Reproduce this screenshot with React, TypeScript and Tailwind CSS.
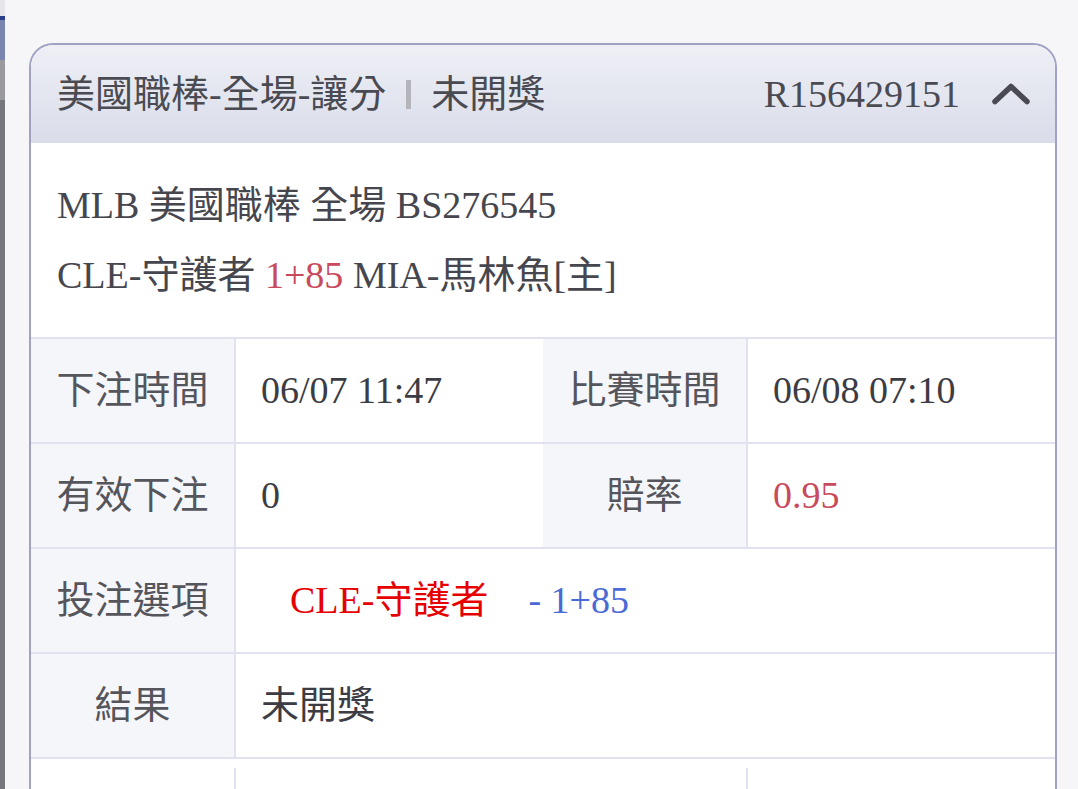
import React from "react";

const LINE = "border-[#e1e2ef]";

function Row({ children }: { children: React.ReactNode }) {
  return (
    <div className={`grid h-[105px] grid-cols-[205px_307px_205px_1fr] border-t-2 ${LINE}`}>
      {children}
    </div>
  );
}

function Label({ children }: { children: React.ReactNode }) {
  return (
    <div className={`flex items-center justify-center border-r-2 ${LINE} bg-[#f5f6fa] text-[#55555c]`}>
      {children}
    </div>
  );
}

export default function App() {
  return (
    <div className="flex min-h-[789px] w-full overflow-hidden bg-[#f6f6f8] font-['Liberation_Serif','Noto_Sans_CJK_TC',serif] text-[38px]">
      {/* background strip of the page behind */}
      <div className="flex w-[5px] shrink-0 flex-col">
        <div className="h-[16px] bg-[#e6e6ea]" />
        <div className="h-[4px] bg-[#2a3f8a]" />
        <div className="h-[40px] bg-[#7b86b0]" />
        <div className="h-[40px] bg-[#9a9a9e]" />
        <div className="flex-1 bg-[#76777c]" />
      </div>

      <div className="flex-1 pl-[24px] pr-[21px] pt-[43px]">
        <div className="overflow-hidden rounded-t-[24px] border-x-2 border-t-2 border-[#a0a2c4] bg-white">
          {/* header */}
          <div className="flex h-[98px] items-center bg-gradient-to-b from-[#eff0f6] to-[#d9dce9] pl-[26px] pr-[25px] text-[#4a4a52]">
            <span>美國職棒-全場-讓分</span>
            <span className="mx-[20px] inline-block h-[29px] w-[5px] shrink-0 bg-[#b4b4bc]" />
            <span>未開獎</span>
            <span className="ml-auto">R156429151</span>
            <svg className="ml-[32px]" width="38" height="22" viewBox="0 0 38 22" fill="none">
              <path d="M3 18.5 L19 3.5 L35 18.5" stroke="#4a4a52" strokeWidth="5.5" strokeLinecap="round" strokeLinejoin="round" />
            </svg>
          </div>

          {/* info lines */}
          <div className="px-[26px] py-[27px] leading-[70px] text-[#46464e]">
            <div>MLB 美國職棒 全場 BS276545</div>
            <div>
              CLE-守護者 <span className="text-[#c94a5c]">1+85</span> MIA-馬林魚[主]
            </div>
          </div>

          {/* table */}
          <div className="text-[#3c3c44]">
            <Row>
              <Label>下注時間</Label>
              <div className="flex items-center pl-[25px]">06/07 11:47</div>
              <Label>比賽時間</Label>
              <div className="flex items-center pl-[25px]">06/08 07:10</div>
            </Row>
            <Row>
              <Label>有效下注</Label>
              <div className="flex items-center pl-[25px]">0</div>
              <Label>賠率</Label>
              <div className="flex items-center pl-[25px] text-[#c94a5c]">0.95</div>
            </Row>
            <Row>
              <Label>投注選項</Label>
              <div className="col-span-3 flex items-center pl-[54px]">
                <span className="text-[#e60000]">CLE-守護者</span>
                <span className="ml-[40px] text-[#4a6ad6]">- 1+85</span>
              </div>
            </Row>
            <Row>
              <Label>結果</Label>
              <div className="col-span-3 flex items-center pl-[25px]">未開獎</div>
            </Row>
            <div className={`grid h-[105px] grid-cols-[205px_307px_205px_1fr] border-t-2 ${LINE}`}>
              <div className={`mt-[9px] border-r-2 ${LINE}`} />
              <div />
              <div className={`mt-[9px] border-r-2 ${LINE}`} />
              <div />
            </div>
          </div>
        </div>
      </div>
    </div>
  );
}
